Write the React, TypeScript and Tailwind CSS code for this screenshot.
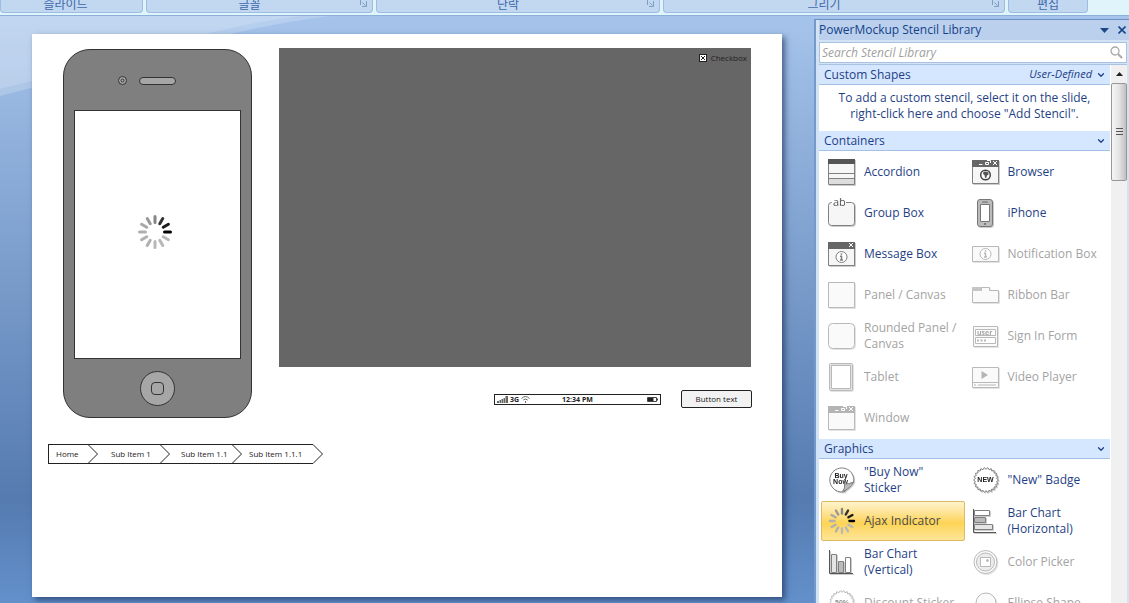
import type { ReactNode } from "react";
import { ChevronDown } from "lucide-react";

const ribbonGroups = [
  { label: "슬라이드", className: "w-[143px] pr-3", launcher: false },
  { label: "글꼴", className: "w-[227px] pr-5", launcher: true },
  { label: "단락", className: "w-[284px] pr-5", launcher: true },
  { label: "그리기", className: "w-[342px] pr-5", launcher: true },
  { label: "편집", className: "w-20", launcher: false },
];

function Launcher() {
  return (
    <svg className="absolute right-1 top-0 size-[9px]" viewBox="0 0 9 9" fill="none" stroke="#7f9dc4">
      <path d="M1.5 5V0M3.5 2.5L6.5 5.5" />
      <path d="M7.5 1V6.5H3" />
    </svg>
  );
}

function Ribbon() {
  return (
    <header className="flex h-4 shrink-0 items-start gap-[3px] overflow-hidden border-b border-[#8cb0da] bg-[#e0f4fc]">
      {ribbonGroups.map((g) => (
        <div
          key={g.label}
          className={`relative flex h-[13px] shrink-0 items-end justify-center rounded-b border-x border-b border-[#9dbde2] bg-[#c2d7f0] text-xs leading-[14px] text-[#3f69aa] ${g.className}`}
        >
          {g.label}
          {g.launcher && <Launcher />}
        </div>
      ))}
    </header>
  );
}

const spokeColors = [
  "#000000", "#b8b8b8", "#b8b8b8", "#b8b8b8", "#b0b0b0", "#b0b0b0",
  "#b0b0b0", "#a8a8a8", "#999999", "#858585", "#333333", "#1c1c1c",
];

function Spinner({ className }: { className: string }) {
  return (
    <svg className={className} viewBox="-18 -18 36 36" strokeWidth="3" strokeLinecap="round">
      {spokeColors.map((c, i) => (
        <path key={i} d="M9.5 0H15.5" stroke={c} transform={`rotate(${i * 30})`} />
      ))}
    </svg>
  );
}

function Phone() {
  return (
    <div className="absolute left-[31px] top-[15px] flex h-[369px] w-[189px] flex-col items-center rounded-[27px] border border-[#333] bg-[#7f7f7f] pt-[26px]">
      <div className="flex w-full items-center gap-3 pl-[54px]">
        <svg className="size-[9px]" viewBox="0 0 9 9" fill="#a6a6a6" stroke="#333">
          <circle cx="4.5" cy="4.5" r="4" />
          <circle cx="4.5" cy="4.5" r="1.5" />
        </svg>
        <div className="h-2 w-[37px] rounded-full border border-[#333] bg-[#a6a6a6]" />
      </div>
      <div className="mt-[25px] flex h-[249px] w-[167px] items-center justify-center border border-[#333] bg-white pb-1.5 pr-1.5">
        <Spinner className="size-9" />
      </div>
      <div className="mt-3 flex size-[35px] items-center justify-center rounded-full border border-[#333] bg-[#a6a6a6]">
        <div className="size-[13px] rounded border border-[#333]" />
      </div>
    </div>
  );
}

function Panel() {
  return (
    <div className="absolute left-[247px] top-[14px] flex h-[319px] w-[472px] items-start justify-end bg-[#666] pr-1 pt-[5px]">
      <label className="flex items-center gap-1 text-[8px] leading-[10px] text-[#222]">
        <span className="relative flex size-2">
          <input
            type="checkbox"
            defaultChecked
            className="peer size-2 appearance-none border border-[#222] bg-white"
          />
          <svg
            className="pointer-events-none absolute inset-0 hidden size-2 peer-checked:block"
            viewBox="0 0 8 8"
            stroke="#222"
          >
            <path d="M2 2L6 6M6 2L2 6" />
          </svg>
        </span>
        Checkbox
      </label>
    </div>
  );
}

function StatusBar() {
  return (
    <div className="absolute left-[462px] top-[360px] grid h-[11px] w-[167px] grid-cols-3 items-center border border-[#222] bg-white px-[2px] text-[7px] font-bold leading-[9px] text-[#222]">
      <div className="flex items-center gap-[2px]">
        <svg className="h-[7px] w-[11px]" viewBox="0 0 11 7" fill="#666">
          <path d="M0 5h2v2H0zM2.5 4h1.5v3H2.5zM4.5 3H6v4H4.5zM6.500 2H8v5H6.500zM8.500 0H11v7H8.500z" />
        </svg>
        3G
        <svg className="h-[7px] w-[9px]" viewBox="0 0 9 7" fill="none" stroke="#666">
          <path d="M0.500 2.500Q4.500 -1.500 8.500 2.500M2.300 4Q4.500 2 6.700 4M4.500 5V7" />
        </svg>
      </div>
      <div className="text-center">12:34 PM</div>
      <svg className="h-[5px] w-[11px] justify-self-end" viewBox="0 0 11 5">
        <path d="M0.500 0.500H9.500V4.500H0.500z" fill="white" stroke="#444" />
        <path d="M1 1H6.500V4H1z" fill="#222" />
        <path d="M10 1.500H11V3.500H10z" fill="#444" />
      </svg>
    </div>
  );
}

const crumbs = [
  { label: "Home", className: "w-[39px] pl-[7px]" },
  { label: "Sub Item 1", className: "w-[62px] pl-[13px]" },
  { label: "Sub Item 1.1", className: "w-[62px] pl-[11px]" },
  { label: "Sub Item 1.1.1", className: "w-[71px] pl-[7px]" },
];

function Breadcrumb() {
  return (
    <nav className="absolute left-4 top-[410px]">
      <ol className="flex border-l border-[#222] text-[8px] leading-[18px] text-[#222]">
        {crumbs.map((c, i) => (
          <li key={c.label} className="flex h-5">
            <a href="#" className={`whitespace-nowrap border-y border-[#222] ${c.className}`}>
              {c.label}
            </a>
            <svg className="h-5 w-[10px]" viewBox="0 0 10 20" fill="none" stroke="#222">
              <path d="M0 0.500L9.500 10L0 19.500" />
              {i < crumbs.length - 1 && <path d="M0 0.500H10M0 19.500H10" />}
            </svg>
          </li>
        ))}
      </ol>
    </nav>
  );
}

function Slide() {
  return (
    <main className="relative min-w-0 flex-1 pl-8 pr-8 pt-[18px]">
      <svg className="absolute left-0 top-0 h-20 w-[330px]" viewBox="0 0 330 80">
        <path d="M0 0H330C215 14 105 54 0 80z" fill="#ffffff" fillOpacity="0.2" />
        <path d="M0 0H300C205 12 100 48 0 73z" fill="#ffffff" fillOpacity="0.15" />
      </svg>
      <div className="relative aspect-[4/3] bg-white shadow-[3px_3px_6px_0px_rgba(25,45,85,0.65)]">
        <Phone />
        <Panel />
        <StatusBar />
        <button
          type="button"
          className="absolute left-[649px] top-[356px] h-[18px] w-[71px] rounded-xs border border-[#222] bg-[#f2f2f2] text-[8px] leading-4 text-[#222]"
        >
          Button text
        </button>
        <Breadcrumb />
      </div>
    </main>
  );
}

function serrated(r: number, teeth: number) {
  return Array.from({ length: teeth * 2 }, (_, i) => {
    const a = (i * Math.PI) / teeth;
    const d = i % 2 ? r - 1.8 : r;
    return `${(14 + d * Math.cos(a)).toFixed(2)},${(14 + d * Math.sin(a)).toFixed(2)}`;
  }).join(" ");
}

function Icon({ children }: { children: ReactNode }) {
  return (
    <svg
      className="size-7 shrink-0 overflow-visible drop-shadow-[1px_1px_0px_rgba(0,0,0,0.2)]"
      viewBox="0 0 28 28"
      fill="#f6f6f6"
      stroke="#808080"
    >
      {children}
    </svg>
  );
}

function WindowButtons() {
  return (
    <path
      d="M7 6.500H10.500M13.500 4.500H16.500V6.500H13.500zM15 2.500H18.500V5M21 3L25 7M25 3L21 7"
      stroke="white"
      fill="none"
    />
  );
}

function InfoMark({ cy }: { cy: number }) {
  return (
    <g transform={`translate(13.5 ${cy})`}>
      <circle r="5.5" fill="white" />
      <path d="M0 -1V3M-1.500 -0.800H0.500M-1.500 3H1.500M0 -3.800V-2.300" strokeWidth="1.500" />
    </g>
  );
}

type Stencil = { label: string; icon?: ReactNode; disabled?: boolean; selected?: boolean };

const containers: Stencil[] = [
  {
    label: "Accordion",
    icon: (
      <>
        <path d="M0.500 1.500H26.500V26.500H0.500z" />
        <path d="M0 1H27V6H0z" fill="#555" stroke="none" />
        <path d="M1 21H26V26H1z" fill="#ddd" stroke="none" />
        <path d="M0.500 15.500H26.500M0.500 20.500H26.500" />
      </>
    ),
  },
  {
    label: "Browser",
    icon: (
      <>
        <path d="M0.500 2.500H26.500V25.500H0.500z" />
        <path d="M0 2H27V9H0z" fill="#666" stroke="none" />
        <WindowButtons />
        <circle cx="13.500" cy="17" r="4.800" fill="#fff" stroke="#444" strokeWidth="1.500" />
        <path d="M11.500 14L13.500 13.500L16.500 14.500L16.500 16.500L15 17.500L14 20.500L13 19.500L12.500 17L11 16z" fill="#555" stroke="none" />
      </>
    ),
  },
  {
    label: "Group Box",
    icon: (
      <>
        <rect x="0.500" y="3.500" width="26" height="23" rx="3" />
        <path d="M4 2H18V5H4z" fill="white" stroke="none" />
        <text x="5" y="7" fontSize="11" fill="#555" stroke="none">ab</text>
      </>
    ),
  },
  {
    label: "iPhone",
    icon: (
      <>
        <rect x="5.500" y="0.500" width="15" height="27" rx="2.500" fill="#bbb" stroke="#777" />
        <path d="M8.500 5.500H17.500V22.500H8.500z" fill="white" stroke="#777" />
        <path d="M10 3H16" stroke="#666" />
        <circle cx="13" cy="25" r="1" fill="#666" stroke="none" />
      </>
    ),
  },
  {
    label: "Message Box",
    icon: (
      <>
        <path d="M0.500 2.500H26.500V25.500H0.500z" />
        <path d="M0 2H27V9H0z" fill="#666" stroke="none" />
        <path d="M21 3L25 7M25 3L21 7" stroke="white" />
        <InfoMark cy={17} />
      </>
    ),
  },
  {
    label: "Notification Box",
    disabled: true,
    icon: (
      <>
        <path d="M0.500 6.500H26.500V21.500H0.500z" />
        <InfoMark cy={14} />
      </>
    ),
  },
  { label: "Panel / Canvas", disabled: true, icon: <path d="M0.500 1.500H26.500V26.500H0.500z" /> },
  {
    label: "Ribbon Bar",
    disabled: true,
    icon: (
      <>
        <path d="M0.500 9.500H9.500V6.500H17.500V9.500H26.500V21.500H0.500z" />
        <path d="M0 6H9V10H0z" fill="#999" stroke="none" />
      </>
    ),
  },
  {
    label: "Rounded Panel / Canvas",
    disabled: true,
    icon: <rect x="0.500" y="1.500" width="26" height="25" rx="4" />,
  },
  {
    label: "Sign In Form",
    disabled: true,
    icon: (
      <>
        <path d="M1.500 4.500H25.500V24.500H1.500z" />
        <path d="M3.500 7.500H23.500V13.500H3.500zM3.500 15.500H23.500V21.500H3.500z" fill="white" />
        <text x="5" y="12.500" fontSize="7" fontWeight="bold" fill="#555" stroke="none">user</text>
        <path d="M5 18.500H7M8.500 18.500H10.500M12 18.500H14" strokeWidth="2" />
      </>
    ),
  },
  {
    label: "Tablet",
    disabled: true,
    icon: (
      <>
        <rect x="1.500" y="0.500" width="23" height="27" rx="1" fill="#ccc" />
        <path d="M3.500 2.500H22.500V25.500H3.500z" fill="white" />
      </>
    ),
  },
  {
    label: "Video Player",
    disabled: true,
    icon: (
      <>
        <path d="M0.500 4.500H26.500V24.500H0.500zM0.500 19.500H26.500" />
        <path d="M9.500 8L16 12L9.500 16z" fill="#777" stroke="none" />
        <path d="M2 22H4M6 22H24" />
      </>
    ),
  },
  {
    label: "Window",
    disabled: true,
    icon: (
      <>
        <path d="M0.500 2.500H26.500V25.500H0.500z" />
        <path d="M0 2H27V9H0z" fill="#777" stroke="none" />
        <WindowButtons />
      </>
    ),
  },
];

const graphics: Stencil[] = [
  {
    label: '"Buy Now" Sticker',
    icon: (
      <>
        <path d="M17 25.500A12 12 0 1 1 25.500 16.500Q19 17 17 25.500z" fill="white" />
        <text x="13" y="11.500" textAnchor="middle" className="font-['Liberation_Sans']" fontSize="7" fontWeight="bold" fill="#222" stroke="none">Buy</text>
        <text x="12.500" y="17.500" textAnchor="middle" className="font-['Liberation_Sans']" fontSize="7" fontWeight="bold" fill="#222" stroke="none">Now</text>
        <path d="M14.500 25.500Q17.500 22 16.500 18Q21 18.500 25.500 16Q22 23 14.500 25.500z" fill="#bbb" />
      </>
    ),
  },
  {
    label: '"New" Badge',
    icon: (
      <>
        <polygon points={serrated(12.5, 22)} fill="white" />
        <text x="13.500" y="16" textAnchor="middle" className="font-['Liberation_Sans']" fontSize="7" fontWeight="bold" fill="#222" stroke="none">NEW</text>
      </>
    ),
  },
  { label: "Ajax Indicator", selected: true },
  {
    label: "Bar Chart (Horizontal)",
    icon: (
      <>
        <path d="M2.500 3.500H17.500V8.500H2.500z" fill="white" />
        <path d="M2.500 10.500H13.500V15.500H2.500z" fill="#bbb" />
        <path d="M2.500 17.500H20.500V22.500H2.500z" fill="#e4e4e4" />
        <path d="M1.500 2V25.500H24" fill="none" stroke="#555" />
      </>
    ),
  },
  {
    label: "Bar Chart (Vertical)",
    icon: (
      <>
        <path d="M3.500 6.500H8.500V24.500H3.500z" fill="#e4e4e4" />
        <path d="M10.500 13.500H15.500V24.500H10.500z" fill="#bbb" />
        <path d="M17.500 9.500H22.500V24.500H17.500z" fill="white" />
        <path d="M1.500 2V25.500H25" fill="none" stroke="#555" />
      </>
    ),
  },
  {
    label: "Color Picker",
    disabled: true,
    icon: (
      <>
        <circle cx="13.500" cy="14" r="11.500" />
        <circle cx="13.500" cy="14" r="9" fill="#ddd" />
        <path d="M8.500 9.500H18.500V18.500H8.500z" fill="white" />
        <circle cx="15.500" cy="12.500" r="1" fill="#777" />
      </>
    ),
  },
  {
    label: "Discount Sticker",
    disabled: true,
    icon: (
      <>
        <polygon points={serrated(12.5, 22)} fill="white" />
        <text x="14" y="16" textAnchor="middle" className="font-['Liberation_Sans']" fontSize="7" fontWeight="bold" fill="#333" stroke="none">50%</text>
      </>
    ),
  },
  { label: "Ellipse Shape", disabled: true, icon: <circle cx="14" cy="14" r="10" /> },
];

function StencilGrid({ items }: { items: Stencil[] }) {
  return (
    <div className="grid auto-rows-[41px] grid-cols-2 pl-[2px] pr-[2px] pt-px">
      {items.map((s) => (
        <button
          key={s.label}
          type="button"
          disabled={s.disabled}
          className={`mb-px flex items-center gap-2 rounded-xs border pl-[6px] text-left leading-4 ${
            s.selected
              ? "border-[#dcbb62] bg-linear-to-b from-[#fef3cb] via-[#fdd454] via-55% to-[#fee596] text-[#4a4a4a]"
              : "border-transparent text-[#1f3f85]"
          } disabled:text-[#a3a3a3]`}
        >
          <span className={`flex shrink-0 ${s.disabled ? "opacity-55" : ""}`}>
            {s.icon ? <Icon>{s.icon}</Icon> : <Spinner className="size-7" />}
          </span>
          <span className="max-w-24">{s.label}</span>
        </button>
      ))}
    </div>
  );
}

function SectionHeader({ title, note }: { title: string; note?: string }) {
  return (
    <h2 className="flex h-5 items-center border-b border-[#a3c0e6] bg-[#d5e6ff] pl-[5px] pr-1 text-[#1f3f85]">
      <span className="flex-1">{title}</span>
      {note && <em className="mr-1 text-[11px]">{note}</em>}
      <ChevronDown className="size-[10px]" strokeWidth={3} />
    </h2>
  );
}

function Scrollbar() {
  return (
    <div className="flex w-4 shrink-0 flex-col bg-[#f0f0f0]">
      <div className="flex h-[18px] items-center justify-center">
        <svg className="h-1 w-[7px]" viewBox="0 0 7 4" fill="#222">
          <path d="M3.500 0L7 4H0z" />
        </svg>
      </div>
      <div className="flex h-[98px] items-center justify-center rounded-xs border border-[#979797] bg-linear-to-r from-[#f5f5f5] via-[#e4e4e4] to-[#c0c0c0]">
        <svg className="h-2 w-[7px]" viewBox="0 0 7 8" stroke="#555">
          <path d="M0 0.500H7M0 3.500H7M0 6.500H7" />
        </svg>
      </div>
    </div>
  );
}

function StencilLibrary() {
  return (
    <aside className="mt-[3px] flex w-[315px] shrink-0 flex-col border-l-2 border-t border-l-[#7699cb] border-t-[#6c90c4] bg-[#d3e3f6] pl-[3px] text-xs">
      <div className="flex h-5 items-center bg-[#bbd0ec] text-[#15428b]">
        <span className="flex-1">PowerMockup Stencil Library</span>
        <button type="button" aria-label="Panel options" className="mr-[9px]">
          <svg className="h-[5px] w-[9px]" viewBox="0 0 9 5" fill="#1d4789">
            <path d="M0 0H9L4.500 5z" />
          </svg>
        </button>
        <button type="button" aria-label="Close" className="mr-[3px]">
          <svg className="size-2" viewBox="0 0 8 8" stroke="#1d4789" strokeWidth="1.600">
            <path d="M0.500 0.500L7.500 7.500M7.500 0.500L0.500 7.500" />
          </svg>
        </button>
      </div>
      <label className="mr-[2px] mt-[2px] flex h-[21px] shrink-0 items-center border border-[#a9c2e2] bg-white pl-[2px] pr-[3px]">
        <input
          type="search"
          aria-label="Search Stencil Library"
          placeholder="Search Stencil Library"
          className="min-w-0 flex-1 italic outline-none placeholder:text-[#a0a0a0]"
        />
        <svg className="size-[13px]" viewBox="0 0 13 13" fill="none" stroke="#a8a8a8">
          <circle cx="5" cy="5" r="4" strokeWidth="1.300" />
          <path d="M8 8L12 12" strokeWidth="2" />
        </svg>
      </label>
      <div className="mr-[2px] mt-px flex min-h-0 flex-1 border-t border-[#a9c2e2] bg-white">
        <div className="min-w-0 flex-1 overflow-hidden border-r border-white">
          <SectionHeader title="Custom Shapes" note="User-Defined" />
          <p className="px-3 pb-[9px] pt-[5px] text-center leading-4 text-[#1f3f85]">
            To add a custom stencil, select it on the slide, right-click here and choose "Add Stencil".
          </p>
          <SectionHeader title="Containers" />
          <StencilGrid items={containers} />
          <SectionHeader title="Graphics" />
          <StencilGrid items={graphics} />
        </div>
        <Scrollbar />
      </div>
    </aside>
  );
}

export default function App() {
  return (
    <div className="flex h-screen flex-col overflow-hidden font-['Open_Sans','Noto_Sans_CJK_KR',sans-serif]">
      <Ribbon />
      <div className="flex min-h-0 flex-1 bg-linear-to-b from-[#a6c4eb] from-0% via-[#557bb0] via-82% to-[#6390cb]">
        <Slide />
        <StencilLibrary />
      </div>
    </div>
  );
}
